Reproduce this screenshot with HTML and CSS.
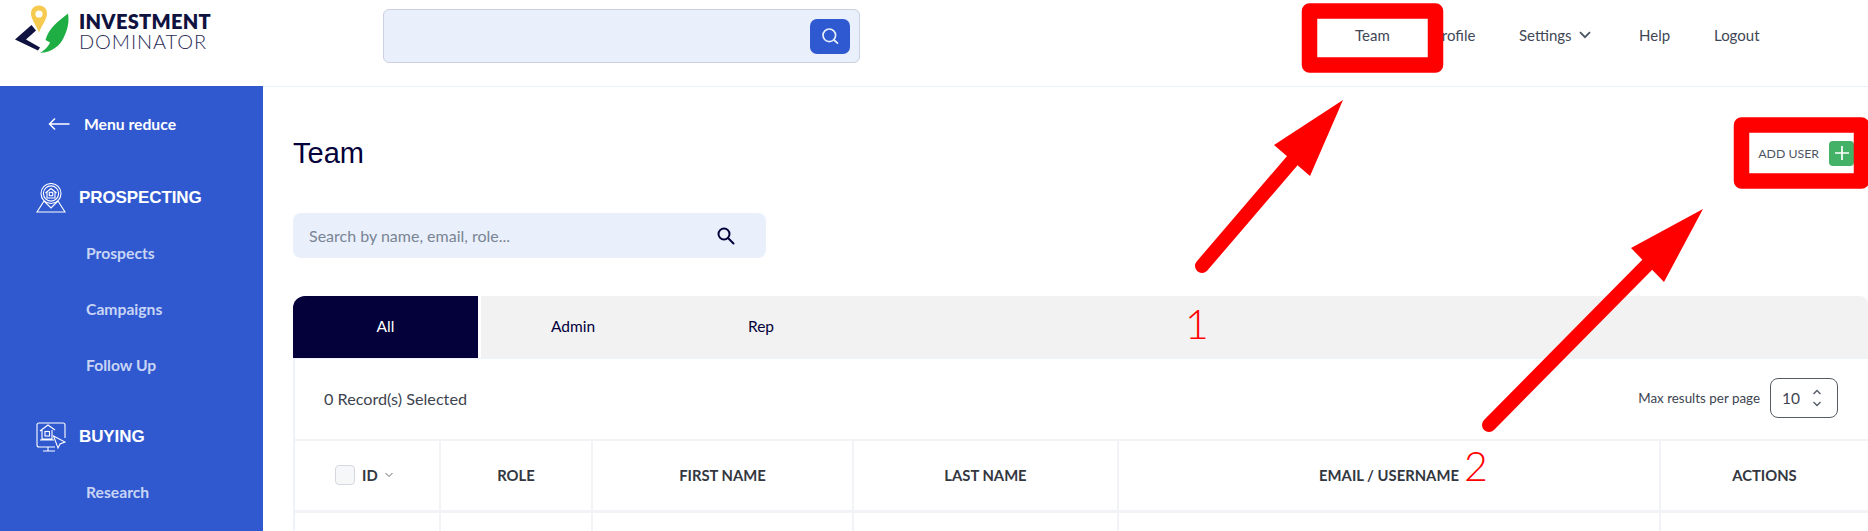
FILE: index.html
```html
<!DOCTYPE html>
<html lang="en">
<head>
<meta charset="utf-8">
<title>Team</title>
<link rel="stylesheet" href="styles.css">
</head>
<body>
<div class="page">
  <header class="topbar">
    <a class="logo">
      <svg class="logo-mark" viewBox="15 5 56 49" width="56" height="49">
        <path d="M39 5.500C33.500 5.500 31 9.500 31 13.500C31 19 36.500 26 39 32.500C41.500 26 47 19 47 13.500C47 9.500 44.500 5.500 39 5.500Z" fill="#f6c94f"/>
        <circle cx="39" cy="14" r="3.600" fill="#fff"/>
        <path d="M31.500 25L15 39.500L38 50.500L40 47.500L26 39.500L36 30.500Z" fill="#10123f"/>
        <path d="M68 13.500C59 21 49 27 45.500 40L50 42.500C47.500 48 44 50.500 40 52.800C52 52.500 60 45.500 63.500 38C67.500 30 69.500 22 68 13.500Z" fill="#1fae44"/>
      </svg>
      <span class="logo-text"><b>INVESTMENT</b><span>DOMINATOR</span></span>
    </a>
    <div class="top-search">
      <button class="top-search-btn" type="button">
        <svg viewBox="0 0 20 20" width="20" height="20" fill="none" stroke="#e8effb" stroke-width="1.700" stroke-linecap="round"><circle cx="9.300" cy="9.300" r="6.300"/><path d="M14 14l3.500 3.200"/></svg>
      </button>
    </div>
    <nav class="topnav">
      <a class="nav-team">Team</a>
      <a class="nav-profile">Profile</a>
      <a class="nav-settings">Settings
        <svg viewBox="0 0 12 8" width="12" height="8" fill="none" stroke="#4b5563" stroke-width="1.800"><path d="M1 1.200l5 5 5-5"/></svg>
      </a>
      <a class="nav-help">Help</a>
      <a class="nav-logout">Logout</a>
    </nav>
  </header>

  <div class="layout">
    <aside class="sidebar">
      <div class="reduce">
        <svg viewBox="0 0 22 14" width="22" height="14" fill="none" stroke="#fff" stroke-width="1.500"><path d="M7 1.500L1.500 7 7 12.500M1.500 7H21.500"/></svg>
        <span>Menu reduce</span>
      </div>
      <div class="group">
        <svg class="group-icon" viewBox="0 0 30 30" width="30" height="30" fill="none" stroke="#fff" stroke-width="1.100">
          <circle cx="15" cy="10.500" r="10"/><circle cx="15" cy="10.500" r="7.600"/>
          <path d="M9.500 10L15 5.500L20.500 10M11 9V15H19V9"/><rect x="13.300" y="9.300" width="3.400" height="3.400"/>
          <path d="M8 18L1 29H29L22 18M8 18L15 25L22 18"/>
        </svg>
        <span>PROSPECTING</span>
      </div>
      <a class="sub sub-first">Prospects</a>
      <a class="sub">Campaigns</a>
      <a class="sub">Follow Up</a>
      <div class="group group-buy">
        <svg class="group-icon" viewBox="0 0 30 30" width="30" height="30" fill="none" stroke="#fff" stroke-width="1.100">
          <path d="M19 25H3Q1 25 1 23V3Q1 1 3 1H27Q29 1 29 3V16"/>
          <path d="M4 9L12 3L19 8M6 8V17H16V8M4 18H18"/><rect x="9" y="9.500" width="4.500" height="4.500"/>
          <path d="M17.500 14L29 20L24 22L22 26Z"/><path d="M12 25V29M7 29H19"/>
        </svg>
        <span>BUYING</span>
      </div>
      <a class="sub sub-first">Research</a>
    </aside>

    <main class="main">
      <div class="title-row">
        <h1>Team</h1>
        <a class="add-user">ADD USER
          <span class="add-icon"><svg viewBox="0 0 16 16" width="16" height="16" fill="none" stroke="#fff" stroke-width="1.700"><path d="M8 1v14M1 8h14"/></svg></span>
        </a>
      </div>
      <div class="page-search">
        <span>Search by name, email, role...</span>
        <svg viewBox="0 0 20 20" width="20" height="20" fill="none" stroke="#03003a" stroke-width="2" stroke-linecap="round"><circle cx="8" cy="8" r="5.500"/><path d="M12 12l5.500 5.500"/></svg>
      </div>
      <div class="tabs">
        <a class="tab tab-active">All</a>
        <a class="tab tab-admin">Admin</a>
        <a class="tab tab-rep">Rep</a>
      </div>
      <section class="card">
        <div class="toolbar">
          <span class="records">0 Record(s) Selected</span>
          <div class="per-page">
            <span>Max results per page</span>
            <div class="select">
              <span>10</span>
              <svg viewBox="0 0 10 20" width="10" height="20" fill="none" stroke="#555c66" stroke-width="1.400"><path d="M1.500 6L5 2.500 8.500 6M1.500 14L5 17.500 8.500 14"/></svg>
            </div>
          </div>
        </div>
        <div class="grid">
          <div class="th th-id"><span class="check"></span><span>ID</span>
            <svg viewBox="0 0 8 6" width="8" height="6" fill="none" stroke="#666" stroke-width="1"><path d="M.5 1l3.500 3.500L7.500 1"/></svg>
          </div>
          <div class="th">ROLE</div>
          <div class="th">FIRST NAME</div>
          <div class="th">LAST NAME</div>
          <div class="th">EMAIL / USERNAME</div>
          <div class="th th-last">ACTIONS</div>
          <div class="td"></div><div class="td"></div><div class="td"></div><div class="td"></div><div class="td"></div><div class="td th-last"></div>
        </div>
      </section>
    </main>
  </div>

  <svg class="marks" viewBox="0 0 1868 531" width="1868" height="531" fill="none" stroke="#ff0000">
    <rect x="1309.500" y="11" width="126" height="54" stroke-width="15.500" stroke-linejoin="round"/>
    <rect x="1741.500" y="125" width="120" height="56" stroke-width="15.500" stroke-linejoin="round"/>
    <path d="M1202 266L1292 161" stroke-width="14" stroke-linecap="round"/>
    <path d="M1343 100L1274 145L1310 176Z" fill="#ff0000" stroke="none"/>
    <path d="M1489 425L1648 264" stroke-width="14" stroke-linecap="round"/>
    <path d="M1703 209L1631 248L1664 282Z" fill="#ff0000" stroke="none"/>
  </svg>
  <span class="mark-num mark-one">1</span>
  <span class="mark-num mark-two">2</span>
</div>
</body>
</html>
```
FILE: styles.css
```css
* { box-sizing: border-box; }
html, body { margin: 0; padding: 0; }
body { font-family: "Lato", "Liberation Sans", sans-serif; color: #3a4252; background: #fff; }
.page { position: relative; width: 1868px; height: 531px; overflow: hidden; }

.topbar { display: flex; align-items: flex-start; height: 87px; border-bottom: 1px solid #e9f0fb; }
.logo { display: flex; margin: 5px 0 0 15px; width: 368px; }
.logo-mark { flex: none; }
.logo-text { display: flex; flex-direction: column; margin: 6px 0 0 8px; color: #10123f; font-size: 20px; line-height: 20px; }
.logo-text b { font-weight: 800; letter-spacing: .3px; }
.logo-text span { font-weight: 300; letter-spacing: .9px; color: #2b2d57; }
.top-search { display: flex; align-items: center; justify-content: flex-end; width: 477px; height: 54px; margin-top: 9px; padding-right: 9px; background: #e9f0fb; border: 1px solid #c9d0e0; border-radius: 6px; }
.top-search-btn { display: flex; align-items: center; justify-content: center; width: 40px; height: 35px; padding: 0; border: 0; border-radius: 7px; background: #2f59d0; }
.topnav { display: flex; margin: 25px 0 0 0; font-size: 15px; line-height: 20px; color: #3f4757; }
.topnav a { display: flex; align-items: center; gap: 7px; }
.nav-team { margin-left: 495px; width: 78px; }
.nav-profile { width: 86px; }
.nav-settings { width: 120px; }
.nav-help { width: 75px; }

.layout { display: flex; height: 444px; }
.sidebar { flex: none; width: 263px; margin-top: -1px; background: #3059d0; color: #fff; }
.reduce { display: flex; align-items: center; gap: 14px; height: 20px; margin: 28px 0 0 48px; font-size: 15.700px; font-weight: 700; line-height: 20px; }
.group { display: flex; align-items: center; gap: 13px; height: 30px; margin: 49px 0 0 36px; font-family: "Liberation Sans", sans-serif; font-size: 17px; font-weight: 700; letter-spacing: -.1px; }
.group-buy { margin-top: 47px; }
.sub { display: block; height: 20px; margin: 36px 0 0 86px; font-size: 15.700px; font-weight: 700; line-height: 20px; color: #c8d5f5; }
.sub-first { margin-top: 30px; }

.main { flex: 1; min-width: 0; padding-left: 30px; }
.title-row { display: flex; justify-content: space-between; align-items: center; height: 54px; margin-top: 39px; }
h1 { margin: 0; font-family: "Liberation Sans", sans-serif; font-size: 29px; font-weight: 400; color: #03003a; }
.add-user { display: flex; align-items: center; gap: 10px; margin-right: 14px; font-size: 12.300px; font-weight: 400; color: #4b5563; }
.add-icon { display: flex; align-items: center; justify-content: center; width: 25px; height: 25px; border-radius: 4px; background: #43b266; }
.page-search { display: flex; align-items: center; justify-content: space-between; width: 473px; height: 45px; margin-top: 33px; padding: 0 30px 0 16px; background: #e9f0fb; border-radius: 8px; font-size: 16px; color: #7a8494; }
.tabs { display: flex; height: 62px; margin-top: 38px; background: #f2f2f2; border-radius: 12px 8px 0 0; color: #03003a; font-size: 15.500px; }
.tab { display: flex; align-items: center; justify-content: center; padding-bottom: 2px; }
.tab-active { width: 188px; background: #03003a; border-right: 3px solid #fff; color: #fff; border-radius: 12px 0 0 0; font-weight: 400; }
.tab-admin { width: 184px; }
.tab-rep { width: 192px; }

.card { border-left: 2px solid #eef2fb; border-top: 1px solid #eef2fb; }
.toolbar { display: flex; justify-content: space-between; align-items: center; height: 80px; padding: 0 30px 2px 29px; }
.records { font-size: 16.200px; color: #3d4450; }
.per-page { display: flex; align-items: center; gap: 10px; font-size: 13.400px; color: #3d4450; }
.select { display: flex; align-items: center; justify-content: space-between; width: 68px; height: 40px; padding: 0 15px 0 11px; border: 1px solid #555c66; border-radius: 8px; font-size: 15.500px; }
.grid { display: grid; grid-template-columns: 146px 152px 261px 265px 542px 1fr; grid-template-rows: 72px 30px; border-top: 2px solid #f2f3f6; }
.th, .td { border-right: 2px solid #f2f3f6; }
.th { display: flex; align-items: center; justify-content: center; padding-bottom: 1px; border-bottom: 3px solid #f2f3f6; font-size: 14.800px; font-weight: 700; color: #33373f; }
.th-last { border-right: 0; }
.th-id { justify-content: flex-start; gap: 7px; padding-left: 40px; }
.check { width: 20px; height: 20px; border: 1px solid #d5d8de; border-radius: 4px; background: #f6f7f9; }

.marks { position: absolute; left: 0; top: 0; pointer-events: none; }
.mark-num { position: absolute; font-family: "Lato", sans-serif; font-size: 41px; font-weight: 300; line-height: 40px; color: #ff0000; }
.mark-one { left: 1185px; top: 304px; }
.mark-two { left: 1464px; top: 446px; }
```
